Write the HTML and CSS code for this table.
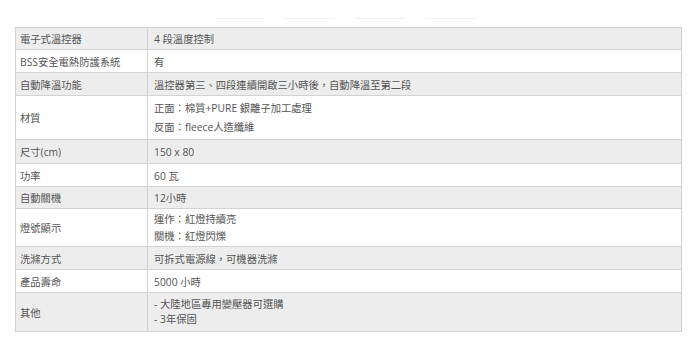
FILE: index.html
```html
<!DOCTYPE html>
<html lang="zh-Hant">
<head>
<meta charset="utf-8">
<title>規格</title>
<link rel="stylesheet" href="styles.css">
</head>
<body>
<div class="tabs"><span></span><span></span><span></span><span></span></div>
<div class="spec">
  <div class="row grey h22"><div class="k">電子式溫控器</div><div class="v">4 段溫度控制</div></div>
  <div class="row h23"><div class="k">BSS安全電熱防護系統</div><div class="v">有</div></div>
  <div class="row grey h23"><div class="k">自動降溫功能</div><div class="v">溫控器第三、四段連續開啟三小時後，自動降溫至第二段</div></div>
  <div class="row h44"><div class="k">材質</div><div class="v lh19">正面：棉質+PURE 銀離子加工處理<br>反面：fleece人造纖維</div></div>
  <div class="row grey h24"><div class="k">尺寸(cm)</div><div class="v">150 x 80</div></div>
  <div class="row h23"><div class="k">功率</div><div class="v">60 瓦</div></div>
  <div class="row grey h22"><div class="k">自動關機</div><div class="v">12小時</div></div>
  <div class="row h38"><div class="k">燈號顯示</div><div class="v lh17">運作：紅燈持續亮<br>關機：紅燈閃爍</div></div>
  <div class="row grey h23"><div class="k">洗滌方式</div><div class="v">可拆式電源線，可機器洗滌</div></div>
  <div class="row h23"><div class="k">產品壽命</div><div class="v">5000 小時</div></div>
  <div class="row grey h39"><div class="k">其他</div><div class="v lh15">- 大陸地區專用變壓器可選購<br>- 3年保固</div></div>
</div>
</body>
</html>
```
FILE: styles.css
```css
html, body {
  margin: 0;
  padding: 0;
  background: #ffffff;
}
body {
  padding: 0 0 0 15px;
  font-family: "Open Sans", "Noto Sans CJK TC", sans-serif;
  font-size: 10.3px;
  color: #555555;
}
.tabs {
  display: flex;
  gap: 20px;
  padding: 18px 0 0 200px;
  height: 9px;
}
.tabs span {
  display: block;
  width: 50px;
  height: 1px;
  background: #f2f2f2;
}
.spec {
  width: 665px;
  border: 1px solid #d2d2d2;
  border-bottom: none;
}
.row {
  display: grid;
  grid-template-columns: 132px 1fr;
  border-bottom: 1px solid #d2d2d2;
  box-sizing: border-box;
}
.row.grey { background: #ededed; }
.k {
  border-right: 1px solid #d2d2d2;
  padding-left: 4px;
  display: flex;
  align-items: center;
  white-space: nowrap;
}
.v {
  padding-left: 6px;
  display: flex;
  flex-direction: column;
  justify-content: center;
  white-space: nowrap;
}
.v.lh19 { display: block; line-height: 19px; padding-top: 3px; }
.v.lh17 { display: block; line-height: 17px; padding-top: 2px; }
.v.lh15 { display: block; line-height: 15px; padding-top: 4px; }
.h22 { height: 22px; }
.h23 { height: 23px; }
.h24 { height: 24px; }
.h38 { height: 38px; }
.h39 { height: 39px; }
.h44 { height: 44px; }
```
